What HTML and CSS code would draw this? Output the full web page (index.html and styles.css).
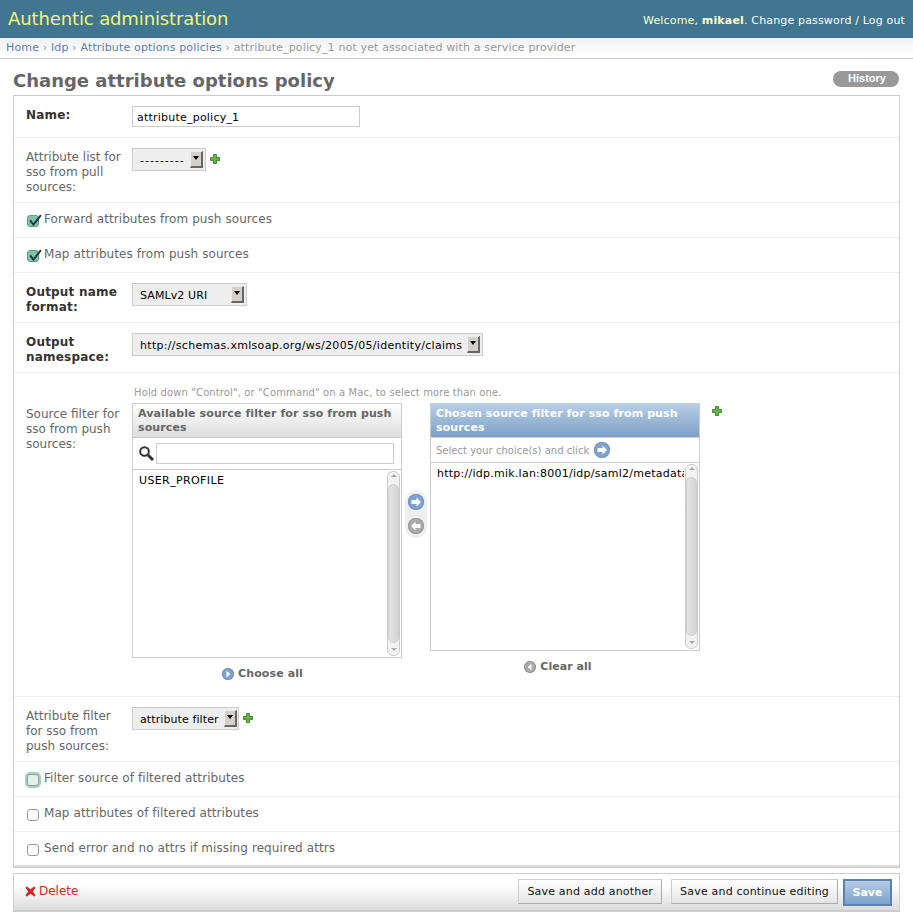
FILE: index.html
```html
<!DOCTYPE html>
<html lang="en">
<head>
<meta charset="utf-8">
<title>Change attribute options policy</title>
<link rel="stylesheet" href="styles.css">
</head>
<body>
<header class="topbar">
  <h1 class="brand">Authentic administration</h1>
  <div class="usertools">Welcome, <strong>mikael</strong>. <a href="#">Change password</a> / <a href="#">Log out</a></div>
</header>
<nav class="crumbs"><a href="#">Home</a> › <a href="#">Idp</a> › <a href="#">Attribute options policies</a> › attribute_policy_1 not yet associated with a service provider</nav>
<main class="content">
  <div class="titlebar">
    <h2 class="title">Change attribute options policy</h2>
    <a class="history" href="#">History</a>
  </div>
  <form class="form">
    <div class="fieldset">
      <div class="row row-name">
        <label class="label strong">Name:</label>
        <input class="text-input name-input" type="text" value="attribute_policy_1">
      </div>
      <div class="row row-3line">
        <label class="label">Attribute list for sso from pull sources:</label>
        <div class="select sel-dash"><span class="select-text dashes">---------</span><span class="arrow"></span></div>
        <svg class="plus" viewBox="0 0 10 10"><path d="M3.500.5h3v3h3v3h-3v3h-3v-3h-3v-3h3z"/></svg>
      </div>
      <div class="row row-check">
        <span class="check checked"><svg viewBox="0 0 14 14"><path d="M3 6l3 4 7-9" /></svg></span>
        <label class="check-label">Forward attributes from push sources</label>
      </div>
      <div class="row row-check">
        <span class="check checked"><svg viewBox="0 0 14 14"><path d="M3 6l3 4 7-9" /></svg></span>
        <label class="check-label">Map attributes from push sources</label>
      </div>
      <div class="row row-2line">
        <label class="label strong">Output name format:</label>
        <div class="select sel-saml"><span class="select-text">SAMLv2 URI</span><span class="arrow"></span></div>
      </div>
      <div class="row row-2line">
        <label class="label strong">Output namespace:</label>
        <div class="select"><span class="select-text url">http://schemas.xmlsoap.org/ws/2005/05/identity/claims</span><span class="arrow"></span></div>
      </div>
      <div class="row row-filter">
        <label class="label label-filter">Source filter for sso from push sources:</label>
        <div class="selector-wrap">
          <p class="help">Hold down "Control", or "Command" on a Mac, to select more than one.</p>
          <div class="selector">
            <div class="sel-col">
              <div class="box box-available">
                <h3 class="box-title">Available source filter for sso from push sources</h3>
                <div class="filter-row">
                  <svg class="search" viewBox="0 0 15 15"><circle cx="5.500" cy="5.500" r="4.300"/><path class="search-handle" d="M9 9l5 5"/></svg>
                  <input class="text-input filter-input" type="text">
                </div>
                <div class="list list-avail">
                  <div class="list-text">USER_PROFILE</div>
                  <div class="scroll"><span class="sb-btn sb-up"></span><span class="sb-thumb"></span><span class="sb-btn sb-down"></span></div>
                </div>
              </div>
              <a class="all-link choose-link" href="#"><span class="round blue"><svg viewBox="0 0 16 16"><path d="M6 3.500l5 4.500-5 4.500z"/></svg></span>Choose all</a>
            </div>
            <div class="movers">
              <span class="move blue"><svg viewBox="0 0 16 16"><path d="M8.500 3.500l4.500 4.500-4.500 4.500V10H3.500V6h5z"/></svg></span>
              <span class="move grey"><svg viewBox="0 0 16 16"><path d="M7.500 3.500L3 8l4.500 4.500V10h5V6h-5z"/></svg></span>
            </div>
            <div class="sel-col">
              <div class="box box-chosen">
                <h3 class="box-title chosen-title">Chosen source filter for sso from push sources</h3>
                <div class="choice-hint">Select your choice(s) and click <span class="round blue hint-icon"><svg viewBox="0 0 16 16"><path d="M8.500 3.500l4.500 4.500-4.500 4.500V10H3.500V6h5z"/></svg></span></div>
                <div class="list list-chosen">
                  <div class="list-text">http://idp.mik.lan:8001/idp/saml2/metadata</div>
                  <div class="scroll"><span class="sb-btn sb-up"></span><span class="sb-thumb"></span><span class="sb-btn sb-down"></span></div>
                </div>
              </div>
              <a class="all-link clear-link" href="#"><span class="round grey"><svg viewBox="0 0 16 16"><path d="M10 3.500L5 8l5 4.500z"/></svg></span>Clear all</a>
            </div>
            <svg class="plus plus-chosen" viewBox="0 0 10 10"><path d="M3.500.5h3v3h3v3h-3v3h-3v-3h-3v-3h3z"/></svg>
          </div>
        </div>
      </div>
      <div class="row row-3line">
        <label class="label">Attribute filter for sso from push sources:</label>
        <div class="select sel-attr"><span class="select-text">attribute filter</span><span class="arrow"></span></div>
        <svg class="plus" viewBox="0 0 10 10"><path d="M3.500.5h3v3h3v3h-3v3h-3v-3h-3v-3h3z"/></svg>
      </div>
      <div class="row row-check">
        <span class="check focused"></span>
        <label class="check-label">Filter source of filtered attributes</label>
      </div>
      <div class="row row-check">
        <span class="check"></span>
        <label class="check-label">Map attributes of filtered attributes</label>
      </div>
      <div class="row row-check row-last">
        <span class="check"></span>
        <label class="check-label">Send error and no attrs if missing required attrs</label>
      </div>
    </div>
    <div class="submit-row">
      <a class="delete" href="#"><svg class="delete-icon" viewBox="0 0 12 12"><path d="M2 .5L6 3.500 10 .5 11.500 2 8.500 6 11.500 10 10 11.500 6 8.500 2 11.500 .5 10 3.500 6 .5 2z"/></svg>Delete</a>
      <span class="btn">Save and add another</span>
      <span class="btn">Save and continue editing</span>
      <span class="btn btn-default">Save</span>
    </div>
  </form>
</main>
</body>
</html>
```

FILE: styles.css
```css
* { box-sizing: border-box; }
html, body { margin: 0; padding: 0; }
body {
  background: #fff;
  color: #333;
  font-family: "DejaVu Sans", sans-serif;
  font-size: 12px;
  line-height: 15px;
  height: 922px;
  overflow: hidden;
}
a { color: #5b80b2; text-decoration: none; }

.topbar {
  height: 38px;
  background: #417690;
  color: #ffc;
  display: flex;
  justify-content: space-between;
  align-items: center;
  padding: 0 8px;
}
.brand { margin: 0; font-size: 18px; font-weight: 400; line-height: 38px; color: #f4f379; letter-spacing: -.12px; }
.usertools { font-size: 11px; line-height: 15px; margin-top: 2px; letter-spacing: .16px; }
.usertools strong { color: #ffc; }
.usertools a { color: #fff; }

.crumbs {
  height: 21px;
  padding: 3px 6px 0;
  font-size: 11px;
  line-height: 14px;
  color: #999;
  border-bottom: 1px solid #ccc;
  background: linear-gradient(#f0f0f0, #fff 85%);
  white-space: nowrap;
  letter-spacing: .15px;
}

.content { padding: 0 13px; }
.titlebar { display: flex; justify-content: space-between; height: 36px; }
.title { margin: 0; padding-top: 11px; font-size: 18px; line-height: 22px; color: #666; font-weight: 700; }
.history {
  margin-top: 12px;
  margin-right: 1px;
  width: 66px;
  height: 16px;
  border-radius: 8px;
  background: #999;
  color: #fff;
  font-family: "Liberation Sans", sans-serif;
  font-weight: 700;
  font-size: 11px;
  line-height: 15px;
  text-align: center;
  padding-left: 2px;
}

.fieldset { border: 1px solid #ccc; width: 887px; }
.row {
  display: flex;
  align-items: flex-start;
  padding: 10px 12px;
  border-bottom: 1px solid #eee;
  color: #666;
}
.row-name { height: 42px; }
.row-3line { height: 65px; }
.row-check { height: 35px; align-items: flex-start; padding-top: 9px; }
.row-2line { height: 50px; }
.row-filter { height: 324px; padding-bottom: 0; padding-top: 0; }
.row-last { border-bottom: 2px solid #ddd; }

.label { width: 106px; flex: none; font-size: 12px; line-height: 15px; padding: 2px 8px 0 0; }
.label.strong { font-weight: 700; color: #333; letter-spacing: .2px; }
.label-filter { padding-top: 34px; }

.text-input {
  border: 1px solid #ccc;
  background: #fff;
  font: 11px/14px "DejaVu Sans", sans-serif;
  color: #000;
  padding: 3px 4px 1px;
  outline: 0;
}
.name-input { width: 228px; height: 21px; letter-spacing: .22px; }

.select {
  display: inline-flex;
  align-items: center;
  flex: none;
  height: 23px;
  background: #eee;
  border: 1px solid #ccc;
  padding-left: 7px;
  padding-right: 2px;
  font-size: 11px;
  color: #000;
}
.select-text { white-space: nowrap; flex: 1; padding-top: 1px; letter-spacing: .1px; }
.select-text.dashes { letter-spacing: 1px; }
.select-text.url { letter-spacing: .3px; }
.arrow {
  width: 13px;
  height: 17px;
  margin-left: 5px;
  background: #d4d0c8;
  border-top: 1px solid #eee;
  border-left: 1px solid #eee;
  border-right: 2px solid #666;
  border-bottom: 2px solid #666;
  position: relative;
  flex: none;
}
.arrow::after {
  content: "";
  position: absolute;
  left: 2px;
  top: 4px;
  border: 3px solid transparent;
  border-top: 4px solid #000;
  border-bottom: 0;
}
.sel-dash { width: 74px; }
.sel-saml { width: 115px; }
.sel-attr { width: 107px; }
.plus { width: 10px; height: 10px; margin: 6px 0 0 4px; flex: none; fill: #6bb04c; stroke: #3f8f2d; stroke-width: 1; }

.check {
  width: 12px;
  height: 12px;
  flex: none;
  margin: 3px 5px 0 1px;
  border: 1px solid #999;
  border-radius: 3px;
  background: #fff;
  position: relative;
}
.check.checked { background: #7fc4a5; border-color: #5f9f85; }
.check.checked svg {
  position: absolute;
  left: -1px;
  top: -2px;
  width: 15px;
  height: 15px;
  fill: none;
  stroke: #234;
  stroke-width: 1.800;
}
.check.focused { background: #e4efe9; box-shadow: 0 0 0 2px #9fd6bd; }
.check-label { font-size: 12px; line-height: 15px; letter-spacing: .08px; }

.selector-wrap { flex: 1; min-width: 0; position: relative; }
.help { margin: 13px 0 4px 2px; font-size: 10px; line-height: 13px; color: #999; height: 13px; letter-spacing: .12px; }
.selector { display: flex; align-items: flex-start; position: relative; }
.sel-col { width: 270px; flex: none; }
.box { border: 1px solid #ccc; }
.box-title {
  margin: 0;
  height: 34px;
  padding: 3px 5px 0;
  font-size: 11px;
  line-height: 14px;
  font-weight: 700;
  letter-spacing: .1px;
  color: #666;
  background: linear-gradient(#fff, #ddd);
  border-bottom: 1px solid #ccc;
}
.chosen-title { color: #fff; background: linear-gradient(#b8cee6, #7ca0c7); }
.filter-row { display: flex; align-items: center; height: 32px; padding: 0 7px 0 6px; border-bottom: 1px solid #ccc; }
.search { width: 15px; height: 15px; margin-right: 2px; flex: none; fill: none; stroke: #333; stroke-width: 2; }
.search-handle { stroke-width: 3; }
.filter-input { flex: 1; height: 21px; min-width: 0; }
.choice-hint {
  display: flex;
  align-items: center;
  height: 25px;
  padding-left: 5px;
  font-size: 10px;
  color: #999;
  border-bottom: 1px solid #ccc;
  gap: 5px;
  letter-spacing: .02px;
}
.list { display: flex; background: #fff; font-size: 11px; color: #000; letter-spacing: .38px; }
.list-avail { height: 187px; }
.list-chosen { height: 187px; letter-spacing: .25px; }
.list-text { flex: 1; padding: 3px 6px; white-space: nowrap; overflow: hidden; min-width: 0; }
.scroll {
  width: 13px;
  margin: 1px;
  flex: none;
  display: flex;
  flex-direction: column;
  border: 1px solid #ccc;
  border-radius: 6px;
  background: #f2f2f2;
}
.sb-btn { height: 12px; flex: none; position: relative; }
.sb-btn::after {
  content: "";
  position: absolute;
  left: 3px;
  border: 3px solid transparent;
}
.sb-up::after { top: 2px; border-bottom-color: #aaa; border-top: 0; }
.sb-down::after { top: 5px; border-top-color: #aaa; border-bottom: 0; }
.sb-thumb { flex: 1; background: linear-gradient(90deg, #e4e4e2, #d4d4d2); border-radius: 6px; border: 1px solid #ccc; }

.all-link {
  display: flex;
  align-items: center;
  justify-content: center;
  gap: 4px;
  height: 15px;
  margin-top: 8px;
  font-size: 11px;
  font-weight: 700;
  color: #666;
  letter-spacing: .05px;
}
.choose-link { padding-right: 9px; letter-spacing: .1px; }
.clear-link { padding-right: 14px; }

.round {
  width: 12px;
  height: 12px;
  border-radius: 50%;
  display: inline-flex;
  flex: none;
}
.round svg { width: 100%; height: 100%; fill: #fff; }
.hint-icon { width: 16px; height: 16px; }
.blue { background: #7fa3cf; box-shadow: inset 0 0 0 1px #6f94c2; }
.grey { background: #aaa; box-shadow: inset 0 0 0 1px #999; }

.movers {
  width: 22px;
  margin: 88px 3px 0 3px;
  flex: none;
  height: 47px;
  padding-top: 3px;
  background: #eee;
  border-radius: 10px;
  display: flex;
  flex-direction: column;
  align-items: center;
  gap: 8px;
}
.move { width: 16px; height: 16px; border-radius: 50%; display: inline-flex; }
.move svg { width: 100%; height: 100%; fill: #fff; }
.plus-chosen { margin: 3px 0 0 12px; }

.submit-row {
  display: flex;
  justify-content: flex-end;
  align-items: flex-start;
  gap: 9px;
  width: 887px;
  height: 39px;
  margin-top: 5px;
  padding: 5px 7px 0 11px;
  border: 1px solid #ccc;
  border-bottom: 2px solid #ccc;
  background: linear-gradient(#fff 30%, #dcdcdc);
}
.delete {
  margin-right: auto;
  display: flex;
  align-items: center;
  gap: 3px;
  height: 24px;
  color: #e0232a;
  font-size: 12px;
}
.delete-icon { width: 11px; height: 11px; fill: #d8232a; }
.btn {
  height: 25px;
  padding: 0 8px;
  border: 1px solid #ccc;
  border-right-color: #aaa;
  border-bottom-color: #aaa;
  background: linear-gradient(#fff, #e4e4e4);
  font-size: 11px;
  line-height: 24px;
  color: #111;
  white-space: nowrap;
  letter-spacing: .19px;
}
.btn-default {
  height: 27px;
  margin-left: -4px;
  width: 49px;
  padding: 0;
  text-align: center;
  background: linear-gradient(#b3cbe5, #7ea2cb);
  border: 2px solid #5b80b2;
  color: #fff;
  font-weight: 700;
  letter-spacing: 0;
}
```
